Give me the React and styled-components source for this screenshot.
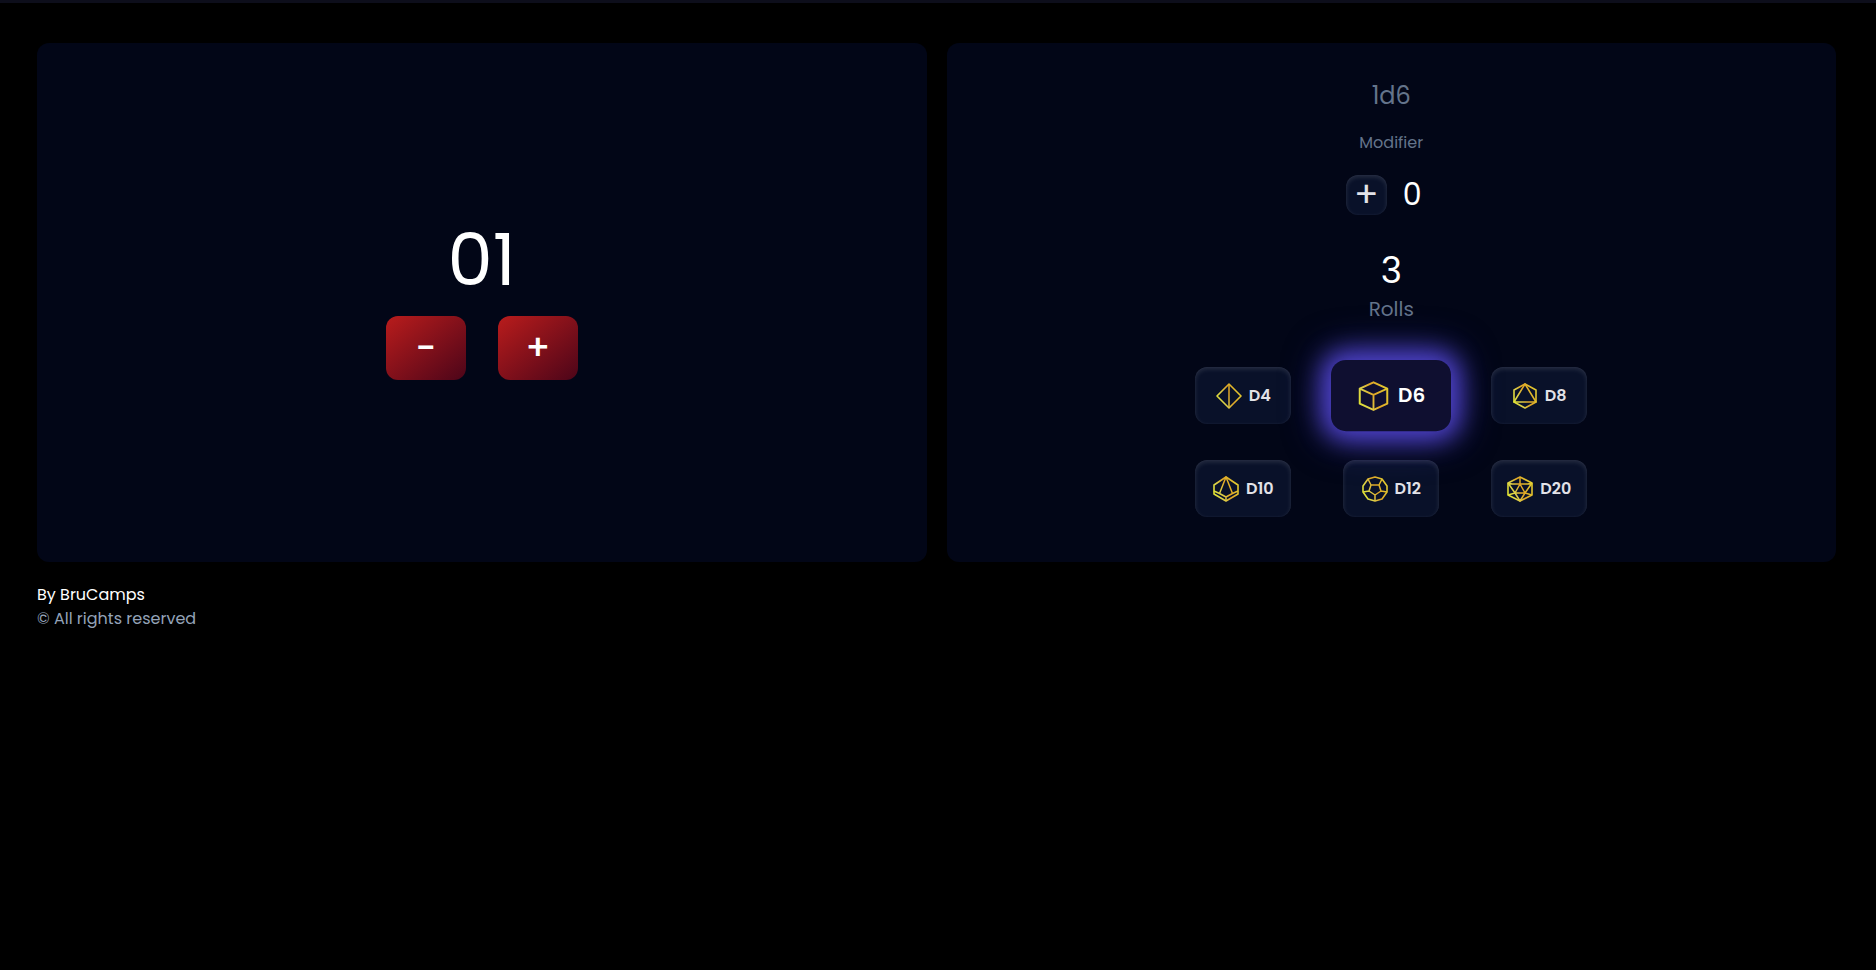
import React, { useState } from "react";
import styled, { createGlobalStyle, css } from "styled-components";

const GlobalStyle = createGlobalStyle`
  *, *::before, *::after { box-sizing: border-box; }
  body {
    margin: 0;
    background: #000;
    color: #fff;
    font-family: Poppins, Inter, "Liberation Sans", sans-serif;
    font-size: 16px;
    line-height: 24px;
  }
  button { font-family: inherit; cursor: pointer; }
`;

const Page = styled.div`
  border-top: 3px solid #0d0e1b;
  padding: 40px 40px 24px 37px;
`;

const Panels = styled.main`
  display: grid;
  grid-template-columns: 1fr 1fr;
  gap: 20px;
`;

const Panel = styled.section`
  display: flex;
  flex-direction: column;
  align-items: center;
  justify-content: ${(p) => (p.$centered ? "center" : "flex-start")};
  padding: 33px 24px 45px;
  border-radius: 12px;
  background: #020617;
`;

const Counter = styled.output`
  margin: 10px 0 20px;
  font-size: 72px;
  line-height: 72px;
`;

const Row = styled.div`
  display: flex;
  align-items: center;
  gap: ${(p) => p.$gap}px;
`;

const StepButton = styled.button`
  width: 80px;
  height: 64px;
  padding: 0;
  border: 0;
  border-radius: 12px;
  color: #fff;
  background: linear-gradient(to bottom right, #b91c1c, #4c0519);
  font-size: 36px;
  line-height: 64px;
  font-weight: 500;
`;

const Formula = styled.p`
  margin: 0;
  color: #64748b;
  font-size: 24px;
  line-height: 40px;
`;

const ModifierLabel = styled.h2`
  margin: 15px 0 20px;
  color: #64748b;
  font-size: 16px;
  line-height: 24px;
  font-weight: 400;
`;

const darkSurface = css`
  border: 0;
  color: #e2e2e8;
  background: #091129;
  box-shadow: inset 0 2px 5px rgba(255, 255, 255, 0.13),
    inset 0 0 2px rgba(255, 255, 255, 0.06);
`;

const ModifierButton = styled.button`
  ${darkSurface}
  width: 41px;
  height: 40px;
  padding: 0;
  border-radius: 12px;
  font-size: 36px;
  line-height: 36px;
  font-weight: 400;
`;

const ModifierValue = styled.output`
  width: 34px;
  font-size: 30px;
  line-height: 40px;
`;

const Result = styled.output`
  margin-top: 34px;
  font-size: 36px;
  line-height: 44px;
`;

const ResultLabel = styled.p`
  margin: 0 0 42px;
  color: #64748b;
  font-size: 20px;
  line-height: 32px;
`;

const DiceGrid = styled.div`
  display: grid;
  grid-template-columns: repeat(3, 96px);
  gap: 36px 52px;
`;

const DieButton = styled.button`
  ${darkSurface}
  display: flex;
  align-items: center;
  justify-content: center;
  gap: 7px;
  height: 57px;
  padding: 0;
  border-radius: 12px;
  font-size: 16px;
  line-height: 24px;
  font-weight: 600;
  svg { width: 26px; height: 26px; }
  ${(p) =>
    p.$active &&
    css`
      transform: scale(1.25);
      color: #fff;
      background: #0f0f30;
      box-shadow: 0 0 20px 6px #4f43cc, 0 0 32px 5px rgba(79, 67, 204, 0.6);
    `}
`;

const Footer = styled.footer`
  padding-top: 21px;
`;

const FooterLine = styled.p`
  margin: 0;
  color: ${(p) => (p.$muted ? "#94a3b8" : "#fff")};
`;

const shapes = {
  4: { rim: "M13 1 25 13 13 25 1 13Z", inner: "M13 1V25" },
  6: { rim: "M13 2 24 7V19L13 24 2 19V7Z", inner: "M2 7 13 12 24 7M13 12V24" },
  8: { rim: "M13 1 24 7V19L13 25 2 19V7Z", inner: "M13 1 2 19H24Z" },
  10: {
    rim: "M13 1 25 9V18L13 25 1 18V9Z",
    inner: "M13 1 6.5 17.5 13 21 19.5 17.5ZM6.5 17.5 1 15M19.5 17.5 25 15M13 21V25",
  },
  12: {
    rim: "M13 1 20 3 25 10V16L20 23 13 25 6 23 1 16V10L6 3Z",
    inner: "M9 9H17L19 15 13 19 7 15ZM9 9 6 3M17 9 20 3M19 15 25 16M13 19V25M7 15 1 16",
  },
  20: {
    rim: "M13 1 25 7V19L13 25 1 19V7Z",
    inner: "M13 1V8M1 7 5 8H21L25 7M13 8 8 17H18ZM1 7 8 17 13 25 18 17 25 7M1 19 8 17M25 19 18 17",
  },
};

function DieIcon({ sides }) {
  const { rim, inner } = shapes[sides];
  const id = `gold-${sides}`;
  return (
    <svg viewBox="0 0 26 26" fill="none" aria-hidden="true">
      <defs>
        <linearGradient id={id} gradientUnits="userSpaceOnUse" x1="1" y1="18" x2="25" y2="8">
          <stop offset="0" stopColor="#dfe233" />
          <stop offset="0.25" stopColor="#dcd04a" />
          <stop offset="0.55" stopColor="#e0a526" />
          <stop offset="1" stopColor="#e2cd31" />
        </linearGradient>
      </defs>
      <path d={rim} stroke={`url(#${id})`} strokeWidth="1.6" strokeLinejoin="round" />
      <path d={inner} stroke={`url(#${id})`} strokeWidth="1.5" strokeLinejoin="round" />
    </svg>
  );
}

export default function App() {
  const [count, setCount] = useState(1);
  const [sides, setSides] = useState(6);
  const [positive, setPositive] = useState(true);

  return (
    <>
      <GlobalStyle />
      <Page>
        <Panels>
          <Panel $centered>
            <Counter>{String(count).padStart(2, "0")}</Counter>
            <Row $gap={32}>
              <StepButton onClick={() => setCount(Math.max(1, count - 1))}>-</StepButton>
              <StepButton onClick={() => setCount(count + 1)}>+</StepButton>
            </Row>
          </Panel>
          <Panel>
            <Formula>{`${count}d${sides}`}</Formula>
            <ModifierLabel>Modifier</ModifierLabel>
            <Row $gap={16}>
              <ModifierButton onClick={() => setPositive(!positive)}>
                {positive ? "+" : "-"}
              </ModifierButton>
              <ModifierValue>0</ModifierValue>
            </Row>
            <Result>3</Result>
            <ResultLabel>Rolls</ResultLabel>
            <DiceGrid>
              {[4, 6, 8, 10, 12, 20].map((n) => (
                <DieButton key={n} $active={n === sides} onClick={() => setSides(n)}>
                  <DieIcon sides={n} />
                  <span>{`D${n}`}</span>
                </DieButton>
              ))}
            </DiceGrid>
          </Panel>
        </Panels>
        <Footer>
          <FooterLine>By BruCamps</FooterLine>
          <FooterLine $muted>© All rights reserved</FooterLine>
        </Footer>
      </Page>
    </>
  );
}
